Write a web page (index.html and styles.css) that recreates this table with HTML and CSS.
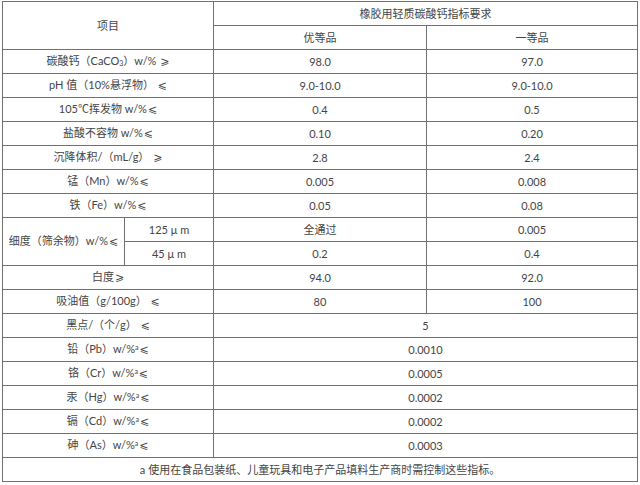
FILE: index.html
```html
<!DOCTYPE html>
<html lang="zh-CN">
<head>
<meta charset="utf-8">
<title>橡胶用轻质碳酸钙指标要求</title>
<link rel="stylesheet" href="styles.css">
</head>
<body>
<table class="spec">
  <colgroup>
    <col class="c1a">
    <col class="c1b">
    <col class="c2">
    <col class="c3">
  </colgroup>
  <tr>
    <td colspan="2" rowspan="2">项目</td>
    <td colspan="2">橡胶用轻质碳酸钙指标要求</td>
  </tr>
  <tr>
    <td>优等品</td>
    <td>一等品</td>
  </tr>
  <tr><td colspan="2">碳酸钙（CaCO<sub>3</sub>）w/% <span class="sym">⩾</span></td><td>98.0</td><td>97.0</td></tr>
  <tr><td colspan="2">pH 值（10%悬浮物） <span class="sym">⩽</span></td><td>9.0-10.0</td><td>9.0-10.0</td></tr>
  <tr><td colspan="2">105℃挥发物 w/%<span class="sym">⩽</span></td><td>0.4</td><td>0.5</td></tr>
  <tr><td colspan="2">盐酸不容物 w/%<span class="sym">⩽</span></td><td>0.10</td><td>0.20</td></tr>
  <tr><td colspan="2">沉降体积/（mL/g） <span class="sym">⩾</span></td><td>2.8</td><td>2.4</td></tr>
  <tr><td colspan="2">锰（Mn）w/%<span class="sym">⩽</span></td><td>0.005</td><td>0.008</td></tr>
  <tr><td colspan="2">铁（Fe）w/%<span class="sym">⩽</span></td><td>0.05</td><td>0.08</td></tr>
  <tr><td rowspan="2">细度（筛余物）w/%<span class="sym">⩽</span></td><td>125 μ m</td><td>全通过</td><td>0.005</td></tr>
  <tr><td>45 μ m</td><td>0.2</td><td>0.4</td></tr>
  <tr><td colspan="2">白度<span class="sym">⩾</span></td><td>94.0</td><td>92.0</td></tr>
  <tr><td colspan="2">吸油值（g/100g） <span class="sym">⩽</span></td><td>80</td><td>100</td></tr>
  <tr><td colspan="2">黑点/（个/g） <span class="sym">⩽</span></td><td colspan="2">5</td></tr>
  <tr><td colspan="2">铅（Pb）w/%<sup>a</sup><span class="sym">⩽</span></td><td colspan="2">0.0010</td></tr>
  <tr><td colspan="2">铬（Cr）w/%<sup>a</sup><span class="sym">⩽</span></td><td colspan="2">0.0005</td></tr>
  <tr><td colspan="2">汞（Hg）w/%<sup>a</sup><span class="sym">⩽</span></td><td colspan="2">0.0002</td></tr>
  <tr><td colspan="2">镉（Cd）w/%<sup>a</sup><span class="sym">⩽</span></td><td colspan="2">0.0002</td></tr>
  <tr><td colspan="2">砷（As）w/%<sup>a</sup><span class="sym">⩽</span></td><td colspan="2">0.0003</td></tr>
  <tr><td colspan="4">a 使用在食品包装纸、儿童玩具和电子产品填料生产商时需控制这些指标。</td></tr>
</table>
</body>
</html>
```
FILE: styles.css
```css
html, body {
  margin: 0;
  padding: 0;
  background: #ffffff;
}

body {
  padding: 1px 0 0 2px;
  font-family: Lato, "Noto Sans CJK SC", sans-serif;
  font-size: 11px;
  color: #444444;
}

.spec {
  border-collapse: collapse;
  table-layout: fixed;
  width: 636px;
}

.c1a { width: 122px; }
.c1b { width: 89px; }
.c2 { width: 213px; }
.c3 { width: 211px; }

.spec td {
  border: 1px solid #707070;
  height: 23px;
  padding: 0;
  text-align: center;
  vertical-align: middle;
  line-height: 14px;
  white-space: nowrap;
}

.spec .sym {
  font-family: "DejaVu Sans", sans-serif;
  font-size: 11px;
  margin-left: 1px;
}

.spec sub {
  font-size: 7px;
  vertical-align: -1px;
  line-height: 0;
}

.spec sup {
  font-size: 7px;
  vertical-align: 3px;
  line-height: 0;
}
```
